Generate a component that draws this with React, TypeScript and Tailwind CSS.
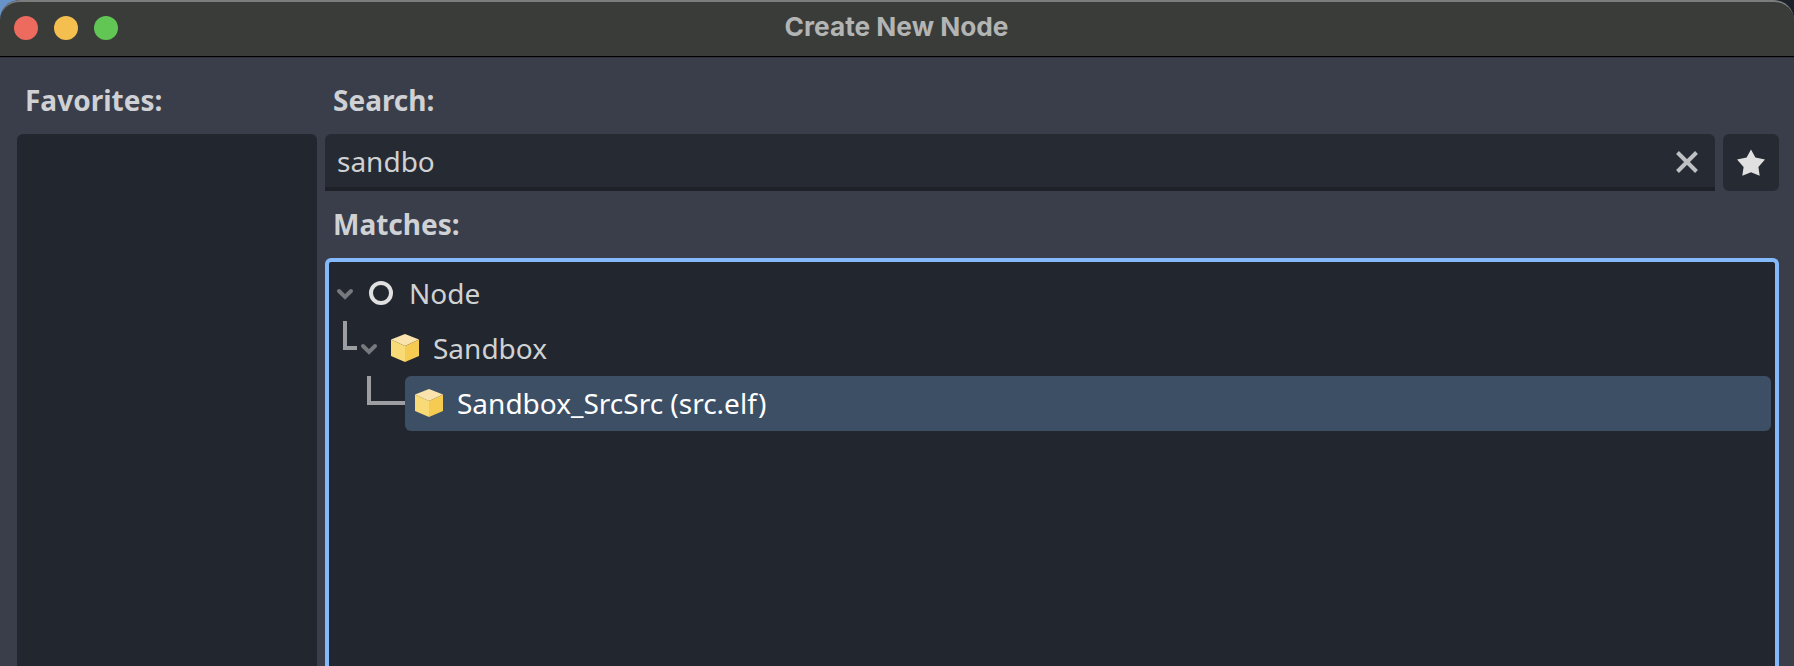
import type { ReactNode } from "react";

const Chevron = () => (
  <svg className="h-[55px] w-5 shrink-0 self-start" viewBox="0 0 20 55" fill="none">
    <path d="M4 25l6 6 6-6" stroke="#76797d" strokeWidth="4" strokeLinecap="round" />
  </svg>
);

const NodeIcon = () => (
  <svg className="size-7 shrink-0" viewBox="0 0 28 28" fill="none">
    <circle cx="14" cy="14" r="10" stroke="#e0e0e0" strokeWidth="4" />
  </svg>
);

const CubeIcon = () => (
  <svg className="size-7 shrink-0" viewBox="0 0 28 28">
    <path d="M14 0L28 5.5 14 12 0 5.5z" fill="#fae3ac" />
    <path d="M0 5.5L14 12V28L0 22z" fill="#f8db76" />
    <path d="M28 5.5L14 12V28L28 22z" fill="#f6cb51" />
  </svg>
);

const Elbow = ({ className }: { className: string }) => (
  <div className={`h-[29px] shrink-0 self-start border-b-4 border-l-4 border-[#9c9ea1] ${className}`} />
);

const Label = ({ children }: { children: ReactNode }) => (
  <div className="h-[38px] pl-2 text-[28px] leading-[38px] font-bold text-[#cfd1d4]">{children}</div>
);

export default function App() {
  return (
    <div className="h-[666px] w-[1794px] overflow-hidden bg-[linear-gradient(90deg,#6793c9_0_26px,#1d2129_26px)]">
      <div className="flex h-full flex-col overflow-hidden rounded-t-[20px] bg-[#393e4a] font-['Noto_Sans',sans-serif] text-[28px] leading-[38px] text-[#cfd1d3]">
        <header className="grid h-[57px] shrink-0 grid-cols-[1fr_auto_1fr] items-center rounded-t-[20px] border-t-2 border-b border-t-[#7b7d7c] border-b-black bg-[#3a3c3a]">
          <div className="flex gap-4 pb-0.5 pl-3.5">
            <span className="size-6 rounded-full bg-[#ed6a5f]" />
            <span className="size-6 rounded-full bg-[#f5bf4f]" />
            <span className="size-6 rounded-full bg-[#62c655]" />
          </div>
          <h1 className="pr-px pb-1 font-['Inter',sans-serif] text-[26.25px] font-bold text-[#b3b5b4]">Create New Node</h1>
          <div />
        </header>

        <main className="flex min-h-0 flex-1 gap-2 border-t border-[#2f333c] pr-[15px] pl-[17px]">
          <section className="flex w-[300px] flex-col pt-[23px]">
            <Label>Favorites:</Label>
            <div className="mt-[15px] flex-1 rounded-t-[6px] bg-[#22262e]" />
          </section>

          <section className="flex min-w-0 flex-1 flex-col pt-[23px]">
            <Label>Search:</Label>
            <div className="mt-[15px] flex h-[57px] shrink-0 gap-2">
              <div className="flex flex-1 items-center justify-between rounded-t-[6px] border-b-4 border-[#1e2128] bg-[#262a33] pr-4 pl-3">
                <span>sandbo</span>
                <svg className="size-6" viewBox="0 0 24 24" fill="none">
                  <path d="M2.5 3.5l19 19M21.5 3.5l-19 19" stroke="#bfc0c3" strokeWidth="4" />
                </svg>
              </div>
              <button className="flex w-14 items-center justify-center rounded-[6px] bg-[#262a33]">
                <svg className="size-7" viewBox="0 0 28 28">
                  <path d="M14 0.5l4.4 8 9.6 2-6.6 7.4 1.3 8.8L14 23.3l-8.7 3.4 1.3-8.8L0 10.5l9.6-2z" fill="#e0e0e0" />
                </svg>
              </button>
            </div>
            <div className="mt-3.5">
              <Label>Matches:</Label>
            </div>
            <div className="mt-[15px] flex-1 rounded-t-[6px] border-x-4 border-t-4 border-[#84b9fb] bg-[#22262e] px-1 pt-1">
              <div className="flex h-[55px] items-center pb-0.5 pl-0.5">
                <Chevron />
                <span className="w-3" />
                <NodeIcon />
                <span className="ml-[14px]">Node</span>
              </div>
              <div className="flex h-[55px] items-center pb-0.5 pl-2.5">
                <Elbow className="w-[14px]" />
                <span className="w-0.5" />
                <Chevron />
                <span className="w-3" />
                <CubeIcon />
                <span className="ml-3.5">Sandbox</span>
              </div>
              <div className="flex h-[55px] items-center pl-[34px]">
                <Elbow className="w-[38px]" />
                <div className="flex h-full flex-1 items-center rounded-[6px] bg-[#3d4f65] pb-0.5 pl-2.5 text-white">
                  <CubeIcon />
                  <span className="ml-3.5">Sandbox_SrcSrc (src.elf)</span>
                </div>
              </div>
            </div>
          </section>
        </main>
      </div>
    </div>
  );
}
